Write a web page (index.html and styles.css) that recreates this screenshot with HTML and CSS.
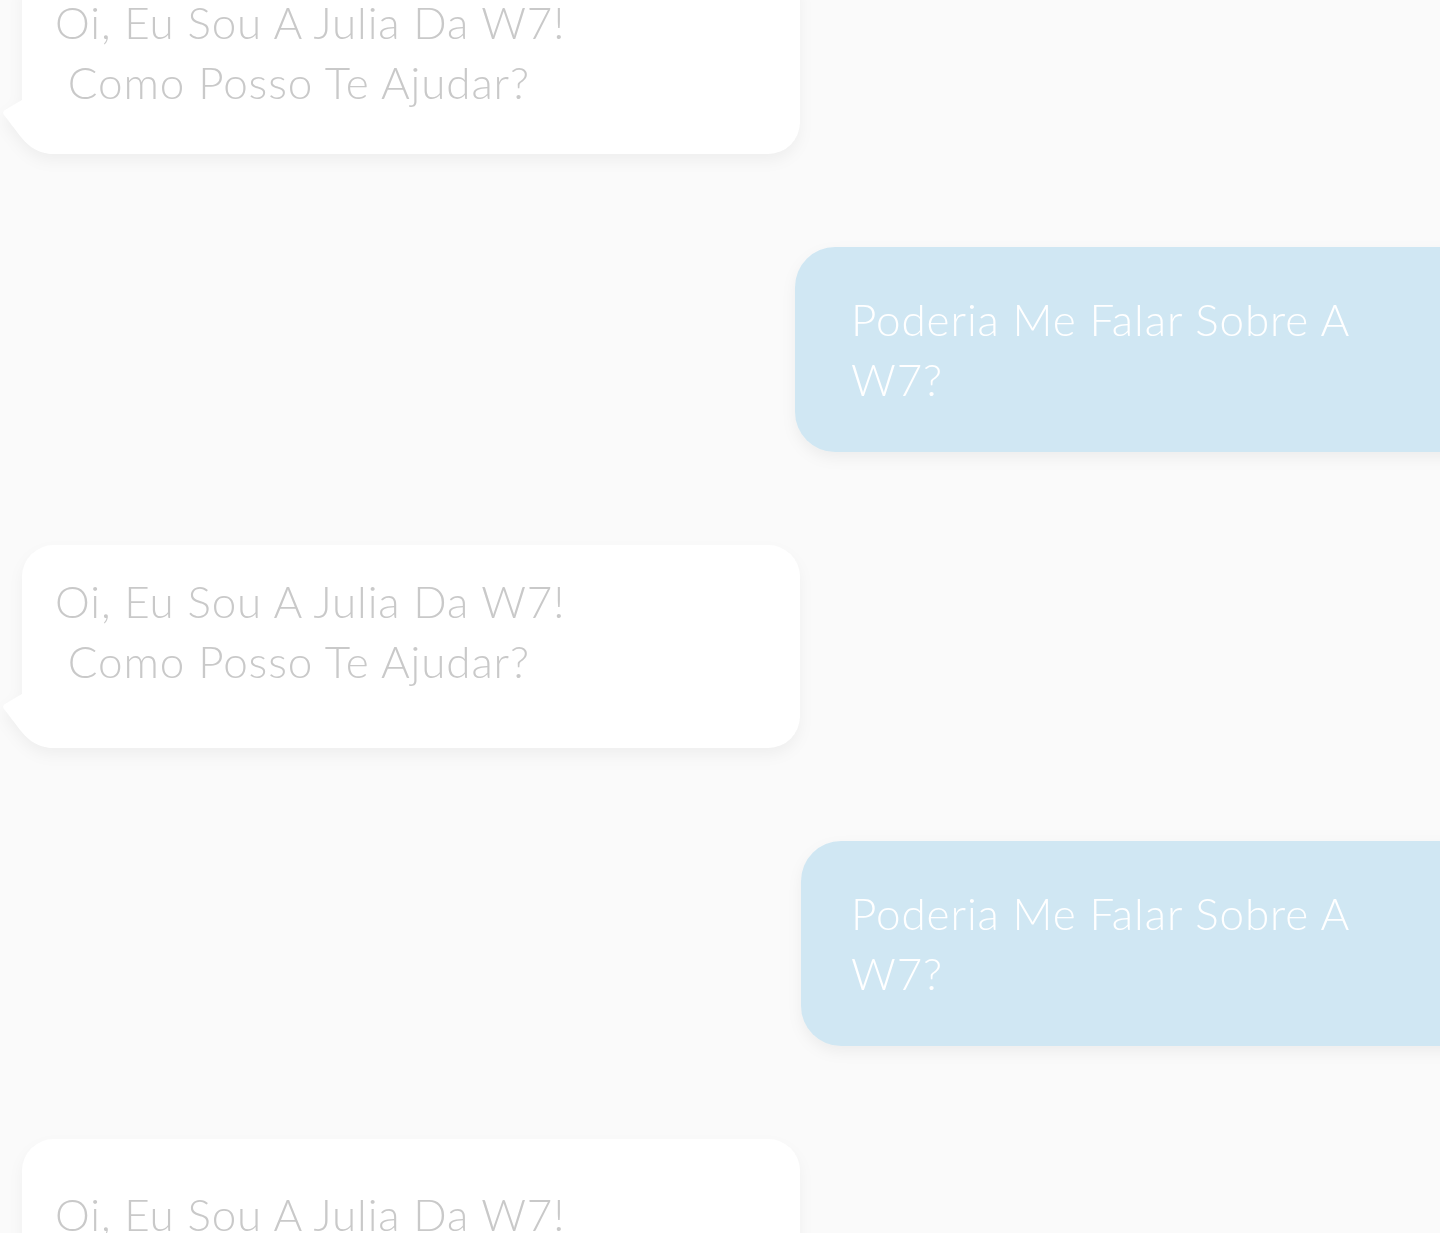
FILE: index.html
```html
<!DOCTYPE html>
<html lang="pt-BR">
<head>
<meta charset="utf-8">
<title>Chat W7</title>
<link rel="stylesheet" href="styles.css">
</head>
<body>
<main class="chat">
  <div class="msg bot msg--first">
    <p class="msg-text">Oi, Eu Sou A Julia Da W7!<br>&nbsp;Como Posso Te Ajudar?</p>
  </div>
  <div class="msg user">
    <p class="msg-text">Poderia Me Falar Sobre A W7?</p>
  </div>
  <div class="msg bot">
    <p class="msg-text">Oi, Eu Sou A Julia Da W7!<br>&nbsp;Como Posso Te Ajudar?</p>
  </div>
  <div class="msg user user--alt">
    <p class="msg-text">Poderia Me Falar Sobre A W7?</p>
  </div>
  <div class="msg bot msg--last">
    <p class="msg-text">Oi, Eu Sou A Julia Da W7!<br>&nbsp;Como Posso Te Ajudar?</p>
  </div>
</main>
</body>
</html>
```
FILE: styles.css
```css
html, body {
  margin: 0;
  padding: 0;
  height: 100%;
  overflow: hidden;
  background: #fafafa;
}

body {
  font-family: "Lato", "Open Sans", sans-serif;
  font-weight: 300;
}

.chat {
  display: flex;
  flex-direction: column;
  gap: 93px;
  margin-top: -34px;
}

.msg {
  position: relative;
  box-sizing: border-box;
  flex-shrink: 0;
}

.msg-text {
  margin: 0;
  font-size: 44px;
  line-height: 60px;
  letter-spacing: 0.9px;
}

.bot {
  align-self: flex-start;
  margin-left: 22px;
  width: 778px;
  background: #ffffff;
  border-radius: 32px;
  padding: 26px 33px 57px;
  filter: drop-shadow(0 7px 7px rgba(0, 0, 0, 0.045));
}

.bot .msg-text {
  color: #c9c9c9;
}

.bot::before {
  content: "";
  position: absolute;
  left: -20px;
  bottom: 0;
  width: 70px;
  height: 54px;
  background: #ffffff;
  clip-path: path("M20 0 L3 10 Q0 12 2 15 C18 34 26 54 52 54 L70 54 L70 0 Z");
}

.msg--first {
  padding-bottom: 42px;
}

.msg--last {
  padding-top: 45px;
}

.user {
  align-self: flex-start;
  margin-left: 795px;
  width: 760px;
  background: #d0e7f3;
  border-radius: 40px;
  padding: 42px 56px 43px;
  filter: drop-shadow(0 6px 7px rgba(0, 0, 0, 0.05));
}

.user .msg-text {
  color: #ffffff;
  width: 580px;
}

.user--alt {
  margin-left: 801px;
  padding-left: 50px;
}
```
